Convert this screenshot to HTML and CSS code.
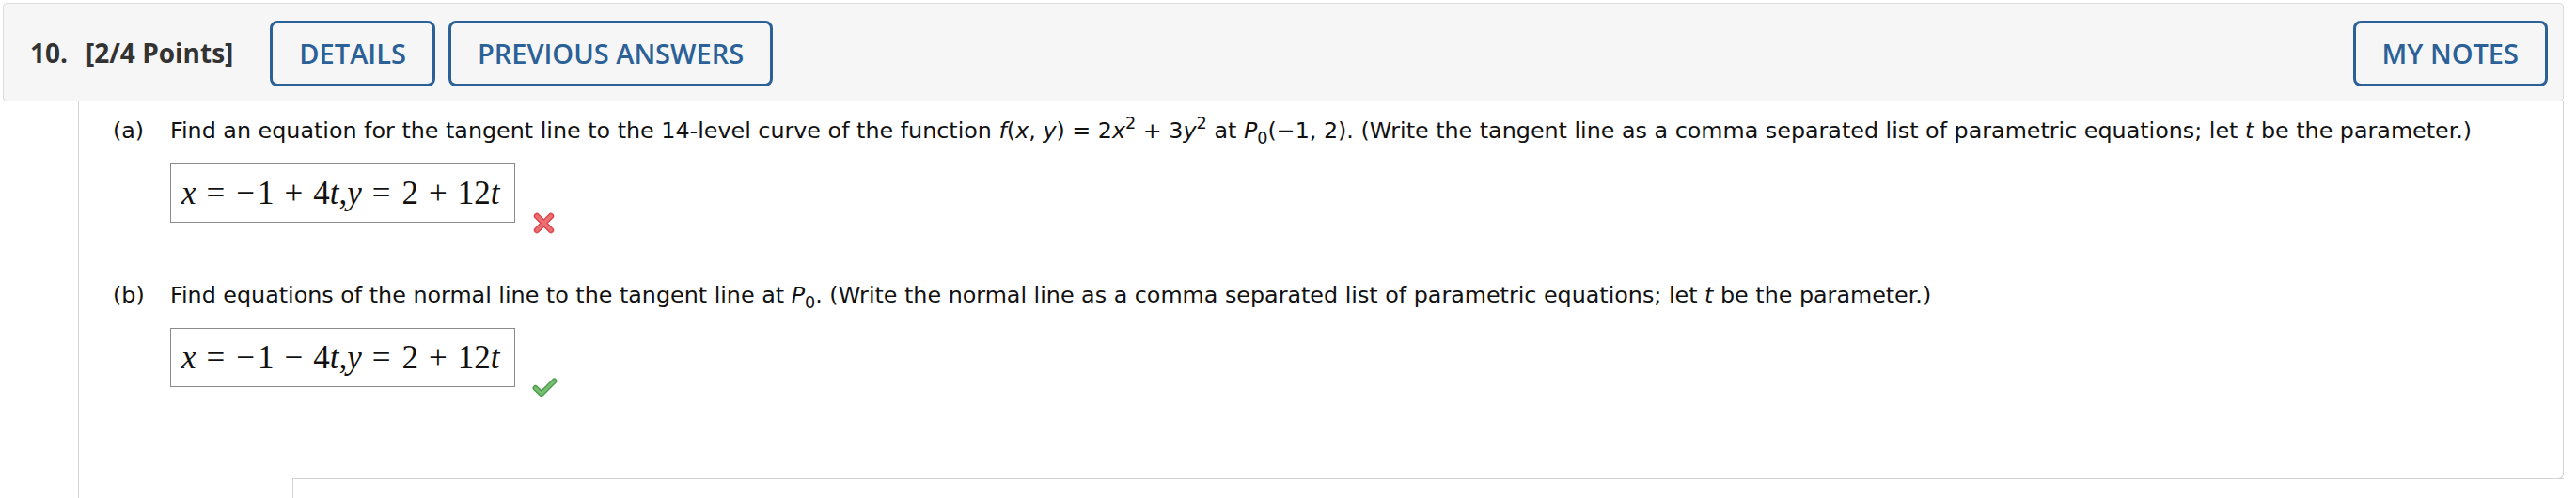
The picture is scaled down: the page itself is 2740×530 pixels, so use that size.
FILE: index.html
```html
<!DOCTYPE html>
<html>
<head>
<meta charset="utf-8">
<link rel="stylesheet" href="styles.css">
</head>
<body>
<div class="question">
  <div class="qhead">
    <span class="qnum">10.</span>
    <span class="qpts">[2/4 Points]</span>
    <button class="btn">DETAILS</button>
    <button class="btn">PREVIOUS ANSWERS</button>
    <button class="btn btn-right">MY NOTES</button>
  </div>
  <div class="qbody">
    <div class="qmain">
      <div class="part">
        <span class="plabel">(a)</span>
        <div class="pcontent">
          <p class="ptext">Find an equation for the tangent line to the 14-level curve of the function <i>f</i>(<i>x</i>, <i>y</i>) = 2<i>x</i><sup>2</sup> + 3<i>y</i><sup>2</sup> at <i>P</i><sub>0</sub>(−1, 2). (Write the tangent line as a comma separated list of parametric equations; let <i>t</i> be the parameter.)</p>
          <div class="answer-row">
            <div class="mathbox"><span class="mi">x</span><span class="rel">=</span><span class="neg">−</span>1<span class="bin">+</span>4<span class="mi">t</span>,<span class="mi">y</span><span class="rel">=</span>2<span class="bin">+</span>12<span class="mi">t</span></div>
            <svg class="mark mark-x" viewBox="0 0 23 23" width="23" height="23">
              <path d="M4 4 L19 19 M19 4 L4 19" stroke="#dc4a50" stroke-width="6.5" stroke-linecap="round" fill="none"/>
              <path d="M4 4 L19 19 M19 4 L4 19" stroke="#ec6f72" stroke-width="3.5" stroke-linecap="round" fill="none"/>
            </svg>
          </div>
        </div>
      </div>
      <div class="part part-b">
        <span class="plabel">(b)</span>
        <div class="pcontent">
          <p class="ptext">Find equations of the normal line to the tangent line at <i>P</i><sub>0</sub>. (Write the normal line as a comma separated list of parametric equations; let <i>t</i> be the parameter.)</p>
          <div class="answer-row">
            <div class="mathbox"><span class="mi">x</span><span class="rel">=</span><span class="neg">−</span>1<span class="bin">−</span>4<span class="mi">t</span>,<span class="mi">y</span><span class="rel">=</span>2<span class="bin">+</span>12<span class="mi">t</span></div>
            <svg class="mark mark-check" viewBox="0 0 27 20" width="27" height="20">
              <path d="M3.5 11 L10 17 L23.5 3.5" stroke="#4e9e4c" stroke-width="6" stroke-linecap="round" stroke-linejoin="round" fill="none"/>
              <path d="M3.5 11 L10 17 L23.5 3.5" stroke="#79c075" stroke-width="3" stroke-linecap="round" stroke-linejoin="round" fill="none"/>
            </svg>
          </div>
        </div>
      </div>
    </div>
    <div class="next"></div>
  </div>
</div>
</body>
</html>
```
FILE: styles.css
```css
html, body {
  margin: 0;
  padding: 0;
  background: #ffffff;
}

.question {
  margin: 3px 13px 0 3px;
}

.qhead {
  height: 105px;
  box-sizing: border-box;
  border: 1px solid #dcdcdc;
  border-radius: 4px;
  background: #f6f6f6;
  display: flex;
  align-items: center;
  padding: 0 16px 0 28px;
  font-family: "Open Sans", "Liberation Sans", sans-serif;
}

.qnum,
.qpts {
  font-weight: 700;
  font-size: 28px;
  color: #333333;
}

.qnum {
  margin-right: 19px;
}

.qpts {
  margin-right: 39px;
}

.btn {
  height: 70px;
  box-sizing: border-box;
  border: 3px solid #2b6196;
  border-radius: 8px;
  background: transparent;
  color: #2b6196;
  font-family: "Open Sans", "Liberation Sans", sans-serif;
  font-weight: 600;
  font-size: 29px;
  padding: 0 28px;
  margin: 2px 14px 0 0;
}

.btn-right {
  margin-left: auto;
  margin-right: 0;
}

.qbody {
  margin-left: 80px;
  border-left: 1px solid #d4d4d4;
}

.qmain {
  position: relative;
  height: 401px;
  box-sizing: border-box;
  padding: 16px 0 0 36px;
}

.qmain::after {
  content: "";
  position: absolute;
  right: 0;
  top: 0;
  bottom: -1px;
  width: 10px;
  border-right: 1px solid #d4d4d4;
  border-bottom: 1px solid #d4d4d4;
  border-bottom-right-radius: 6px;
}

.next {
  margin-left: 227px;
  height: 30px;
  border-top: 1px solid #d4d4d4;
  border-left: 1px solid #d4d4d4;
}

.part {
  display: grid;
  grid-template-columns: 61px auto;
  font-family: "DejaVu Sans", Verdana, sans-serif;
  font-size: 23.8px;
  line-height: 30px;
  color: #111111;
}

.part-b {
  margin-top: 62px;
}

.ptext {
  margin: 0;
}

.ptext sup,
.ptext sub {
  font-size: 0.74em;
  line-height: 0;
}

.ptext sup {
  vertical-align: 0.55em;
}

.ptext sub {
  vertical-align: -0.36em;
}

.answer-row {
  display: flex;
  align-items: flex-start;
  height: 63px;
  margin-top: 20px;
}

.mathbox {
  width: 367px;
  height: 63px;
  box-sizing: border-box;
  border: 1px solid #8a8a8a;
  padding-left: 11px;
  font-family: "Liberation Serif", "Times New Roman", serif;
  font-size: 35px;
  line-height: 61px;
  color: #111111;
  white-space: nowrap;
}

.mi {
  font-style: italic;
}

.rel {
  margin: 0 12px 0 11px;
}

.neg {
  margin-right: 3px;
}

.bin {
  margin: 0 11px;
}

.mark {
  flex: none;
  display: block;
}

.mark-x {
  margin-left: 19px;
  margin-top: 52px;
}

.mark-check {
  margin-left: 18px;
  margin-top: 53px;
}
```
